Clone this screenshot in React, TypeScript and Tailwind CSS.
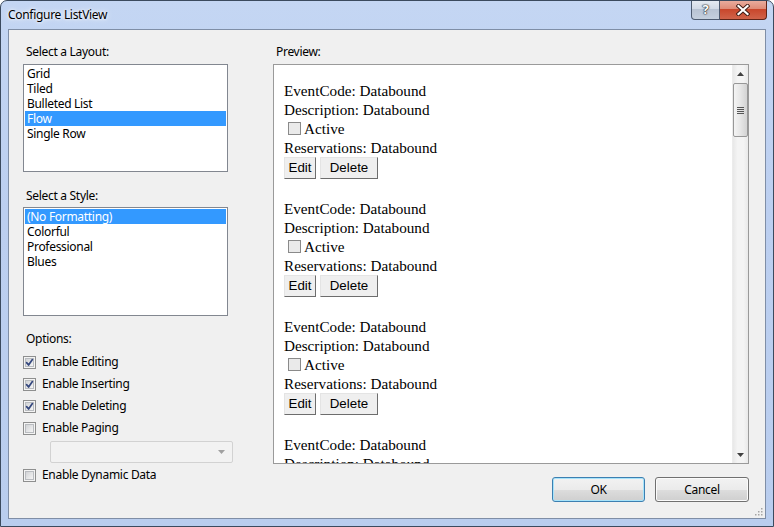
import React from "react";

const ui = { fontFamily: '"Noto Sans", "Segoe UI", sans-serif', letterSpacing: "-0.3px" };

function WinCheck({ checked }: { checked?: boolean }) {
  return (
    <svg width="13" height="13" viewBox="0 0 13 13" className="shrink-0">
      <defs>
        <linearGradient id="cbg" x1="0" y1="0" x2="1" y2="1">
          <stop offset="0" stopColor="#cfd1d4" />
          <stop offset="1" stopColor="#f7f7f7" />
        </linearGradient>
      </defs>
      <rect x="0.5" y="0.5" width="12" height="12" fill="#f4f4f4" stroke="#8e8f8f" />
      <rect x="2.5" y="2.5" width="8" height="8" fill="url(#cbg)" stroke="#b9bcc0" />
      {checked && (
        <path d="M3.6 6.6 L5.6 9 L9.4 3.6" stroke="#34477e" strokeWidth="1.7" fill="none" strokeLinecap="round" strokeLinejoin="round" />
      )}
    </svg>
  );
}

function ListBox({ items, selected, height }: { items: string[]; selected: number; height: string }) {
  return (
    <div className={`border border-[#828790] bg-white p-px ${height}`}>
      {items.map((it, i) => (
        <div
          key={it}
          className={`h-[15px] leading-[15px] pl-[2px] text-[12px] whitespace-nowrap ${
            i === selected ? "bg-[#3399ff] text-white" : "text-black"
          }`}
        >
          {it}
        </div>
      ))}
    </div>
  );
}

function OptionRow({ label, checked }: { label: string; checked?: boolean }) {
  return (
    <div className="h-[22px] flex items-center gap-[6px] text-[12px] text-black">
      <WinCheck checked={checked} />
      <span className="-mt-px">{label}</span>
    </div>
  );
}

function IeButton({ label, w }: { label: string; w: string }) {
  return (
    <div
      className={`h-[22px] ${w} flex items-center justify-center bg-[#efefef] border border-t-[#e4e4e4] border-l-[#e4e4e4] border-r-[#6d6d6d] border-b-[#6d6d6d] text-[13.33px] text-black`}
      style={{ fontFamily: '"Liberation Sans", Arial, sans-serif', letterSpacing: "0" }}
    >
      {label}
    </div>
  );
}

function PreviewBlock() {
  return (
    <div className="mb-[20px] text-[15.2px] text-black" style={{ fontFamily: '"Liberation Serif", "Times New Roman", serif', letterSpacing: "0" }}>
      <div className="h-[19px] leading-[19px] whitespace-nowrap">EventCode: Databound</div>
      <div className="h-[19px] leading-[19px] whitespace-nowrap">Description: Databound</div>
      <div className="h-[19px] leading-[19px] flex items-center whitespace-nowrap">
        <span className="ml-[4px] mr-[3px] w-[13px] h-[13px] border border-[#8a8a8a] bg-[#eaeaea] inline-block" />
        Active
      </div>
      <div className="h-[19px] leading-[19px] whitespace-nowrap">Reservations: Databound</div>
      <div className="flex gap-[4px]">
        <IeButton label="Edit" w="w-[32px]" />
        <IeButton label="Delete" w="w-[58px]" />
      </div>
    </div>
  );
}

function Scrollbar() {
  return (
    <div className="w-[16px] h-full bg-[linear-gradient(90deg,#e8e8e8,#f4f4f4_30%,#f4f4f4_70%,#e9e9e9)] flex flex-col items-center border-l border-[#ececec]">
      <div className="h-[17px] flex items-center justify-center">
        <svg width="7" height="4" viewBox="0 0 7 4">
          <path d="M0 4 L3.5 0 L7 4 Z" fill="#404040" />
        </svg>
      </div>
      <div className="mt-px w-[15px] h-[54px] rounded-[2px] border border-[#979797] bg-[linear-gradient(90deg,#f4f4f4,#e6e6e6_50%,#d3d3d3)] flex flex-col items-center justify-center gap-[1px]">
        <div className="w-[7px] h-px bg-[#555]" />
        <div className="w-[7px] h-px bg-[#555]" />
        <div className="w-[7px] h-px bg-[#555]" />
        <div className="w-[7px] h-px bg-[#555]" />
      </div>
      <div className="flex-1" />
      <div className="h-[17px] flex items-center justify-center">
        <svg width="7" height="4" viewBox="0 0 7 4">
          <path d="M0 0 L3.5 4 L7 0 Z" fill="#404040" />
        </svg>
      </div>
    </div>
  );
}

function DlgButton({ label, def }: { label: string; def?: boolean }) {
  return (
    <div
      className={`h-[25px] flex items-center justify-center rounded-[3px] border text-[12px] text-black ${
        def
          ? "w-[93px] border-[#3c7fb1] shadow-[inset_0_0_0_1px_#a7e3fa] bg-[linear-gradient(180deg,#f2f2f2_0%,#ebebeb_50%,#dddddd_51%,#cfcfcf_100%)]"
          : "w-[94px] border-[#707070] shadow-[inset_0_0_0_1px_#fbfbfb] bg-[linear-gradient(180deg,#f2f2f2_0%,#ebebeb_50%,#dddddd_51%,#cfcfcf_100%)]"
      }`}
    >
      {label}
    </div>
  );
}

export default function App() {
  return (
    <div
      className="w-[774px] h-[527px] flex flex-col border border-[#3b4a5e] rounded-t-[7px] overflow-hidden bg-[linear-gradient(180deg,#c4d6f3_0%,#bccff0_40%,#b9cdee_100%)]"
      style={ui}
    >
      {/* Title bar */}
      <div className="h-[28px] flex items-center relative shrink-0">
        <span className="pl-[7px] text-[12px] text-black [text-shadow:0_0_6px_#ffffff,0_0_3px_#ffffff]">Configure ListView</span>
        <div className="ml-auto mr-[6px] self-start -mt-px flex h-[20px]">
          <div className="w-[29px] h-full rounded-bl-[4px] border border-t-0 border-[#4d5b70] bg-[linear-gradient(180deg,#e7ecf3_0%,#d3dbe7_45%,#b8c3d3_50%,#c5d0de_100%)] flex items-center justify-center">
            <span className="text-[13px] font-bold leading-none text-white [text-shadow:0_0_1px_#222,0_0_1px_#222,0_0_2px_#333]">?</span>
          </div>
          <div className="w-[47px] h-full rounded-br-[4px] border border-l-0 border-t-0 border-[#5f2418] bg-[linear-gradient(180deg,#eab0a2_0%,#df8c78_45%,#c9472c_50%,#d0634a_100%)] flex items-center justify-center">
            <svg width="14" height="12" viewBox="0 0 14 12">
              <path d="M2.5 2 L11.5 10 M11.5 2 L2.5 10" stroke="#3b1a14" strokeWidth="4" strokeLinecap="square" />
              <path d="M2.5 2 L11.5 10 M11.5 2 L2.5 10" stroke="#ffffff" strokeWidth="2.2" strokeLinecap="square" />
            </svg>
          </div>
        </div>
      </div>

      {/* Frame around client */}
      <div className="flex-1 flex px-[7px] pb-[7px] min-h-0">
        <div className="flex-1 relative border border-[#7f8ea6] bg-[#f0f0f0] flex pt-[14px] pl-[14px]">
          {/* Left column */}
          <div className="w-[205px] flex flex-col">
            <div className="h-[16px] leading-[16px] pl-[3px] text-[12px] text-black">Select a Layout:</div>
            <div className="mt-[4px]">
              <ListBox items={["Grid", "Tiled", "Bulleted List", "Flow", "Single Row"]} selected={3} height="h-[108px]" />
            </div>
            <div className="mt-[16px] h-[16px] leading-[16px] pl-[3px] text-[12px] text-black">Select a Style:</div>
            <div className="mt-[3px]">
              <ListBox items={["(No Formatting)", "Colorful", "Professional", "Blues"]} selected={0} height="h-[109px]" />
            </div>
            <div className="mt-[15px] h-[16px] leading-[16px] pl-[3px] text-[12px] text-black">Options:</div>
            <div className="mt-[4px] flex flex-col">
              <OptionRow label="Enable Editing" checked />
              <OptionRow label="Enable Inserting" checked />
              <OptionRow label="Enable Deleting" checked />
              <OptionRow label="Enable Paging" />
            </div>
            <div className="mt-[2px] ml-[27px] w-[183px] h-[22px] rounded-[2px] border border-[#d2d2d2] bg-[#f2f2f2] flex items-center justify-end pr-[7px]">
              <svg width="7" height="4" viewBox="0 0 7 4">
                <path d="M0 0 L3.5 4 L7 0 Z" fill="#a0a0a0" />
              </svg>
            </div>
            <div className="mt-px">
              <OptionRow label="Enable Dynamic Data" />
            </div>
          </div>

          {/* Right column */}
          <div className="ml-[45px] w-[476px] flex flex-col">
            <div className="h-[16px] leading-[16px] pl-[3px] text-[12px] text-black">Preview:</div>
            <div className="mt-[4px] h-[400px] border border-[#9a9a9a] bg-white flex overflow-hidden">
              <div className="flex-1 overflow-hidden pl-[10px] pt-[16px]">
                <PreviewBlock />
                <PreviewBlock />
                <PreviewBlock />
                <PreviewBlock />
              </div>
              <Scrollbar />
            </div>
            <div className="mt-[13px] flex justify-end gap-[10px]">
              <DlgButton label="OK" def />
              <DlgButton label="Cancel" />
            </div>
          </div>

          {/* resize grip */}
          <svg className="absolute right-[2px] bottom-[2px]" width="10" height="10" viewBox="0 0 10 10">
            {[
              [8, 2], [8, 5], [8, 8], [5, 5], [5, 8], [2, 8],
            ].map(([x, y], i) => (
              <rect key={i} x={x} y={y} width="1.5" height="1.5" fill="#a5a5a5" />
            ))}
          </svg>
        </div>
      </div>
    </div>
  );
}
